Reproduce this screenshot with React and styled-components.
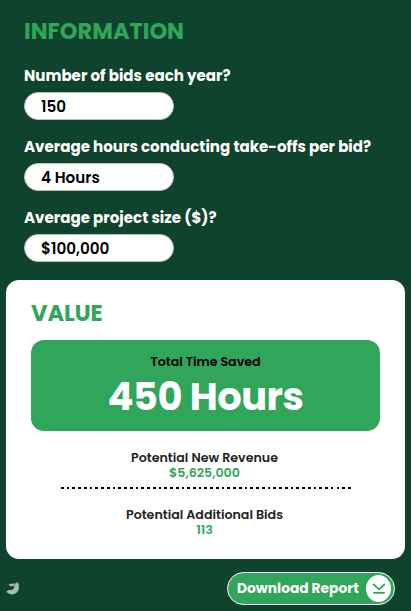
import styled, { createGlobalStyle } from 'styled-components';

const fields = [
    { label: 'Number of bids each year?', value: '150' },
    { label: 'Average hours conducting take-offs per bid?', value: '4 Hours' },
    { label: 'Average project size ($)?', value: '$100,000' },
];

export default function App () {
    return (
        <Page>
            <GlobalStyle />
            <Form>
                <Title>INFORMATION</Title>
                { fields.map(({ label, value }) => (
                    <Field key={label}>
                        <Label>{label}</Label>
                        <Input aria-label={label} defaultValue={value} />
                    </Field>
                ))}
            </Form>

            <Card>
                <Title>VALUE</Title>
                <Highlight>
                    <Caption>Total Time Saved</Caption>
                    <Total>450 Hours</Total>
                </Highlight>
                <Stat>
                    <StatName>Potential New Revenue</StatName>
                    <StatValue>$5,625,000</StatValue>
                </Stat>
                <Dots />
                <Stat>
                    <StatName>Potential Additional Bids</StatName>
                    <StatValue>113</StatValue>
                </Stat>
            </Card>

            <Footer>
                <Mark viewBox="0 0 14 14" aria-hidden="true">
                    <path d="M9 1.6 Q10.2 .4 12 .4 Q13.6 3 12.9 6.4 Q11.8 10.6 8.4 12 Q4.2 13.4 .2 10 Q1.4 8 3.4 7.8 Q5.4 8.4 7 7.2 Q8.8 6 8.2 4.4 Z" />
                    <path d="M2.6 2 L8.6 1.6 L8 4.4 L5.6 4 L4.4 4.4 Z" />
                </Mark>
                <Download type="button">
                    Download Report
                    <Circle>
                        <svg width="14" height="12" viewBox="0 0 14 12" fill="none" stroke="#31a55a" strokeWidth="1.7">
                            <path d="M1.2 1 L7 6.3 L12.8 1 M1.2 9.9 H12.8" />
                        </svg>
                    </Circle>
                </Download>
            </Footer>
        </Page>
    )
}

const GlobalStyle = createGlobalStyle`
    * {
        box-sizing: border-box;
    }

    body {
        margin: 0;
        background-color: #10432d;
        font-family: Poppins, Inter, 'Open Sans', sans-serif;
    }
`

const Page = styled.div`
    width: 411px;
    height: 611px;
    display: flex;
    flex-direction: column;
    padding: 0 6px;
    background-color: #10432d;
    white-space: nowrap;
    overflow: hidden;
`

const Form = styled.div`
    height: 280px;
    padding: 17px 18px 0;
`

const Title = styled.h2`
    margin: 0;
    height: 28px;
    line-height: 28px;
    font-size: 22.5px;
    font-weight: 700;
    color: #31a55a;
`

const Field = styled.div`
    height: 71.2px;
    padding-top: 20px;
`

const Label = styled.label`
    display: block;
    height: 27px;
    line-height: 22px;
    font-size: 15.05px;
    font-weight: 700;
    color: white;
`

const Input = styled.input`
    display: block;
    width: 150px;
    height: 28px;
    padding: 1px 16px 0;
    border: 1px solid #b9c4be;
    border-radius: 14px;
    background-color: white;
    color: black;
    font: inherit;
    font-size: 15.2px;
    font-weight: 600;
    outline: none;
`

const Card = styled.section`
    height: 279px;
    padding: 19px 25px 0;
    border-radius: 13px;
    background-color: white;
`

const Highlight = styled.div`
    height: 91px;
    margin: 13px 0 19px;
    padding-top: 12px;
    border-radius: 13px;
    background-color: #31a55a;
    text-align: center;
`

const Caption = styled.div`
    height: 20px;
    line-height: 20px;
    font-size: 12.6px;
    font-weight: 600;
`

const Total = styled.div`
    height: 48px;
    line-height: 49px;
    font-size: 38.4px;
    font-weight: 700;
    letter-spacing: -0.5px;
    color: white;
`

const Stat = styled.div`
    height: 37px;
    padding-right: 2px;
    text-align: center;
    font-size: 12.65px;
    font-weight: 600;
    line-height: 15px;
`

const StatName = styled.div`
    color: #222;
`

const StatValue = styled.div`
    color: #31a55a;
`

const Dots = styled.div`
    width: 290px;
    height: 2px;
    margin: 0 auto 18px 30px;
    background: repeating-linear-gradient(90deg, black 0 2.7px, transparent 2.7px 5.74px);
`

const Footer = styled.footer`
    display: flex;
    justify-content: space-between;
    align-items: flex-start;
    padding: 13px 10px 0 0;
`

const Mark = styled.svg`
    width: 14px;
    height: 14px;
    margin-top: 10px;
    fill: #a5bdb0;
`

const Download = styled.button`
    display: flex;
    justify-content: space-between;
    align-items: center;
    width: 168px;
    height: 33px;
    padding: 0 3px 0 9px;
    border: 1px solid white;
    border-radius: 17px;
    background-color: #31a55a;
    color: white;
    font: inherit;
    font-size: 13.8px;
    font-weight: 700;
`

const Circle = styled.span`
    display: flex;
    justify-content: center;
    align-items: center;
    width: 25px;
    height: 27px;
    border-radius: 50%;
    background-color: white;
`
